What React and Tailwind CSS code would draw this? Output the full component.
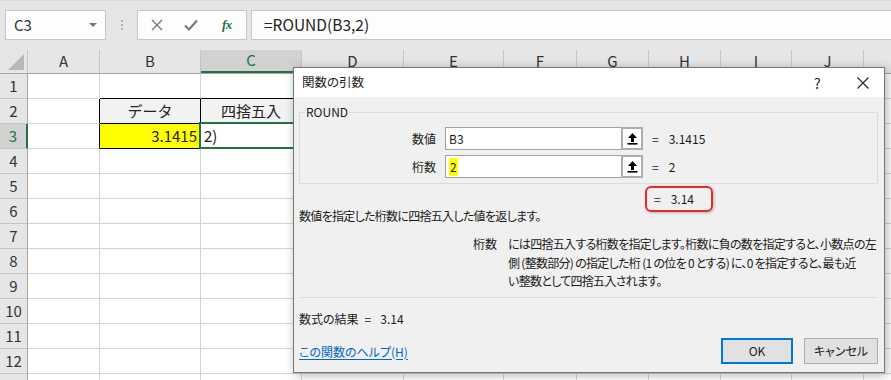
import React from 'react'

const FONT = "font-['Noto_Sans_CJK_JP','Noto_Sans',sans-serif]"

// A..K, widths include the right grid line
const COLS = [
  { name: 'A', w: 'w-[72px]' },
  { name: 'B', w: 'w-[101px]' },
  { name: 'C', w: 'w-[101px]' },
  { name: 'D', w: 'w-[102px]' },
  { name: 'E', w: 'w-[100px]' },
  { name: 'F', w: 'w-[73px]' },
  { name: 'G', w: 'w-[72px]' },
  { name: 'H', w: 'w-[72px]' },
  { name: 'I', w: 'w-[71px]' },
  { name: 'J', w: 'w-[72px]' },
  { name: 'K', w: 'w-[110px]', hidden: true },
]

const ROWS = [1, 2, 3, 4, 5, 6, 7, 8, 9, 10, 11, 12, 13]

function cellBorders(r, c) {
  let right = 'border-r-[#d4d4d4]'
  let bottom = 'border-b-[#d4d4d4]'
  if (r === 1 && (c === 1 || c === 2)) bottom = 'border-b-black'
  if ((r === 2 || r === 3) && c === 0) right = 'border-r-black'
  if ((r === 2 || r === 3) && (c === 1 || c === 2)) {
    right = 'border-r-black'
    bottom = 'border-b-black'
  }
  return `border-r border-b ${right} ${bottom}`
}

function Cell({ r, c, w }) {
  let bg = 'bg-white'
  let content = null
  if (r === 2 && c === 1) { bg = 'bg-[#f2f2f2]'; content = <span className="w-full text-center">データ</span> }
  if (r === 2 && c === 2) { bg = 'bg-[#f2f2f2]'; content = <span className="w-full text-center">四捨五入</span> }
  if (r === 3 && c === 1) { bg = 'bg-[#ffff00]'; content = <span className="w-full text-right pr-[3px]">3.1415</span> }
  if (r === 3 && c === 2) content = <span className="pl-[3px]">2)</span>
  return (
    <div className={`relative h-full shrink-0 flex items-center ${w} ${bg} ${cellBorders(r, c)}`}>
      {content}
      {r === 3 && c === 2 && (
        <div className="absolute -left-[2px] -top-[2px] -right-[1px] -bottom-[1px] border-2 border-[#217346]" />
      )}
    </div>
  )
}

function FormulaBar() {
  return (
    <div className="h-[50px] bg-[#e6e6e6] flex items-start pt-[9px] border-t border-t-[#dadada]">
      <div className="ml-[5px] w-[101px] h-[30px] bg-[#fdfdfd] border border-[#c6c6c6] flex items-center justify-between pl-[8px] pr-[8px] text-[15px] text-[#333]">
        <span>C3</span>
        <span className="w-0 h-0 border-l-[4px] border-r-[4px] border-t-[4px] border-l-transparent border-r-transparent border-t-[#777]" />
      </div>
      <div className="ml-[15px] w-[2px] h-[30px] flex flex-col items-center justify-center gap-[2px]">
        <span className="w-[2px] h-[2px] bg-[#b0b0b0]" />
        <span className="w-[2px] h-[2px] bg-[#b0b0b0]" />
        <span className="w-[2px] h-[2px] bg-[#b0b0b0]" />
      </div>
      <div className="ml-[14px] w-[110px] h-[30px] bg-[#fdfdfd] border border-[#c6c6c6] flex items-center text-[#777]">
        <svg className="ml-[13px] w-[12px] h-[12px]" viewBox="0 0 12 12" fill="none" stroke="currentColor" strokeWidth="1.4">
          <path d="M1 1l10 10M11 1L1 11" />
        </svg>
        <svg className="ml-[21px] w-[14px] h-[12px]" viewBox="0 0 14 12" fill="none" stroke="currentColor" strokeWidth="2">
          <path d="M1 6.5l4 4L13 1.5" />
        </svg>
        <span className="ml-[24px] text-[#217346] italic font-bold text-[13px] font-['Liberation_Serif',serif] tracking-[-0.5px]">fx</span>
      </div>
      <div className="ml-[4px] flex-1 h-[30px] bg-[#fdfdfd] border border-[#c6c6c6] border-r-0 flex items-center pl-[12px] text-[15.5px] text-[#222]">
        =ROUND(B3,2)
      </div>
    </div>
  )
}

function Grid() {
  return (
    <div className="text-[15px] text-[#222]">
      <div className="flex h-[24px] bg-[#e6e6e6] border-b border-b-[#a6a6a6]">
        <div className="w-[28px] shrink-0 border-r border-r-[#c6c6c6] flex items-end justify-end pr-[3px] pb-[3px]">
          <svg className="w-[16px] h-[16px]" viewBox="0 0 16 16">
            <path d="M16 0V16H0z" fill="#b8b8b8" />
          </svg>
        </div>
        {COLS.map((col) => (
          <div
            key={col.name}
            className={`shrink-0 flex items-center justify-center border-r border-r-[#c6c6c6] ${col.w} ${
              col.name === 'C' ? 'bg-[#d2d2d2] text-[#217346] border-b-2 border-b-[#217346]' : 'text-[#333]'
            }`}
          >
            {col.hidden ? '' : col.name}
          </div>
        ))}
      </div>
      {ROWS.map((r) => (
        <div key={r} className="flex h-[25px]">
          <div
            className={`w-[28px] shrink-0 flex items-center justify-center border-b border-b-[#c6c6c6] ${
              r === 3 ? 'bg-[#d2d2d2] text-[#217346] border-r-2 border-r-[#217346]' : 'bg-[#e6e6e6] text-[#333] border-r border-r-[#a6a6a6]'
            }`}
          >
            {r < 13 ? r : ''}
          </div>
          {COLS.map((col, c) => (
            <Cell key={col.name} r={r} c={c} w={col.w} />
          ))}
        </div>
      ))}
    </div>
  )
}

function RefButton() {
  return (
    <div className="w-[22px] h-full shrink-0 border-2 border-[#adadad] bg-white flex items-center justify-center">
      <svg className="w-[11px] h-[12px]" viewBox="0 0 11 12" fill="black">
        <path d="M5.5 0L10 5H7v4H4V5H1z" />
        <rect x="0.5" y="10" width="10" height="1.6" />
      </svg>
    </div>
  )
}

function ArgRow({ label, value, result, highlight }) {
  return (
    <div className="flex items-center h-[23px]">
      <div className="w-[137px] text-right pr-[1px]">{label}</div>
      <div className="ml-[8px] flex h-full">
        <div className="w-[176px] h-full bg-white border border-[#a0a0a0] border-r-0 flex items-center pl-[3px]">
          <span className={highlight ? 'bg-[#ffff00] px-[1px]' : ''}>{value}</span>
        </div>
        <RefButton />
      </div>
      <span className="ml-[9px]">=</span>
      <span className="ml-[10px]">{result}</span>
    </div>
  )
}

function Dialog() {
  return (
    <div className={`absolute left-[293px] top-[67px] w-[592px] h-[306px] border border-[#767676] bg-[#f0f0f0] text-[12px] text-[#1a1a1a] shadow-[2px_2px_10px_rgba(0,0,0,0.3)] [font-feature-settings:'palt'] ${FONT}`}>
      <div className="h-[29px] bg-white flex items-center pl-[8px] relative">
        <span className="text-[12.5px]">関数の引数</span>
        <span className="absolute left-[520px] top-[5px] text-[14px] text-[#222]">?</span>
        <svg className="absolute left-[563px] top-[9px] w-[12px] h-[12px]" viewBox="0 0 12 12" fill="none" stroke="#222" strokeWidth="1.1">
          <path d="M0.5 0.5l11 11M11.5 0.5l-11 11" />
        </svg>
      </div>

      <fieldset className="mx-[5px] mr-[6px] mt-[7px] border border-[#dcdcdc] px-0 pb-[5px] pt-[7px]">
        <legend className="ml-[5px] px-[1px] leading-[16px]">ROUND</legend>
        <div className="flex flex-col gap-[5px]">
          <ArgRow label="数値" value="B3" result="3.1415" />
          <ArgRow label="桁数" value="2" result="2" highlight />
        </div>
      </fieldset>

      <div className="mt-[2px] ml-[351px] w-[68px] h-[26px] border-2 border-[#e52b2b] rounded-[6px] flex items-center pl-[7px] shadow-[1px_1px_3px_rgba(0,0,0,0.25)]">
        <span>=</span>
        <span className="ml-[10px]">3.14</span>
      </div>

      <div className="-mt-[4px] pl-[5px] leading-[16px] tracking-[-0.7px]">数値を指定した桁数に四捨五入した値を返します。</div>

      <div className="mt-[11px] flex leading-[18.5px]">
        <div className="ml-[179px] w-[35px] shrink-0">桁数</div>
        <div className="whitespace-nowrap tracking-[-0.7px]">
          には四捨五入する桁数を指定します。桁数に負の数を指定すると、小数点の左
          <br />
          側 (整数部分) の指定した桁 (1 の位を 0 とする) に、0 を指定すると、最も近
          <br />
          い整数として四捨五入されます。
        </div>
      </div>

      <div className="mt-[6px] mx-[5px] mr-[6px] h-px bg-[#dcdcdc]" />

      <div className="mt-[13px] pl-[5px] leading-[16px] flex">
        <span>数式の結果</span>
        <span className="ml-[6px]">=</span>
        <span className="ml-[9px]">3.14</span>
      </div>

      <div className="mt-[11px] flex items-center pl-[5px] pr-[6px]">
        <a href="#" className="text-[#0066cc] underline underline-offset-2 mt-[2px]">この関数のヘルプ(H)</a>
        <div className="ml-auto flex gap-[11px]">
          <button className="w-[72px] h-[26px] bg-[#e1e1e1] border-2 border-[#0078d7] text-[#1a1a1a]">OK</button>
          <button className="w-[74px] h-[26px] bg-[#e1e1e1] border border-[#adadad] text-[#1a1a1a]">キャンセル</button>
        </div>
      </div>
    </div>
  )
}

export default function App() {
  return (
    <div className={`relative w-[891px] h-[380px] overflow-hidden bg-white ${FONT}`}>
      <FormulaBar />
      <Grid />
      <Dialog />
    </div>
  )
}
